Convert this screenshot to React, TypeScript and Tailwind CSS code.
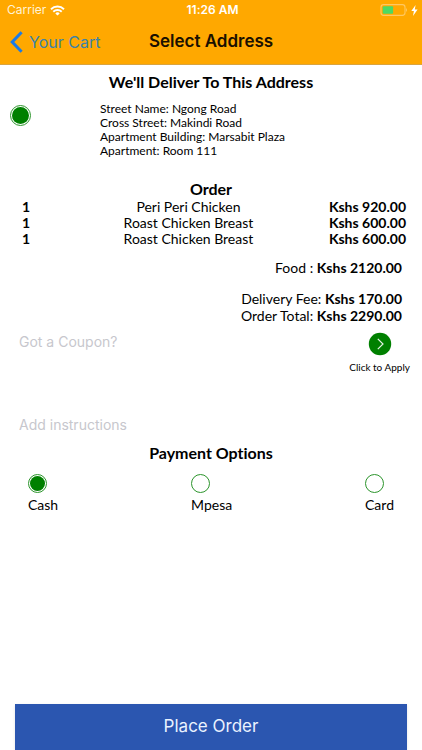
import { useState } from 'react';

const BODY = "font-['Lato',sans-serif]";

const ADDRESS = [
  'Street Name: Ngong Road',
  'Cross Street: Makindi Road',
  'Apartment Building: Marsabit Plaza',
  'Apartment: Room 111',
];

const ITEMS = [
  { id: 1, qty: 1, name: 'Peri Peri Chicken', price: 'Kshs 920.00' },
  { id: 2, qty: 1, name: 'Roast Chicken Breast', price: 'Kshs 600.00' },
  { id: 3, qty: 1, name: 'Roast Chicken Breast', price: 'Kshs 600.00' },
];

const PAYMENTS = ['Cash', 'Mpesa', 'Card'];

function StatusBar() {
  return (
    <div className="grid h-5 grid-cols-3 items-center pl-[7px] pr-1 text-xs text-white">
      <div className="flex items-center gap-1">
        <span className="text-[#fff3d6]">Carrier</span>
        <svg width="15" height="11" viewBox="0 0 15 11" fill="none" stroke="#fff" strokeWidth="1.9">
          <path d="M1 4.2a9.3 9.3 0 0 1 13 0" />
          <path d="M3.3 6.7a6 6 0 0 1 8.4 0" />
          <path d="M7.5 10.6 5.3 8.4a3.1 3.1 0 0 1 4.4 0z" fill="#fff" stroke="none" />
        </svg>
      </div>
      <span className="text-center font-semibold">11:26 AM</span>
      <div className="flex items-center justify-end gap-1">
        <svg width="28" height="12" viewBox="0 0 28 12" fill="none">
          <rect x="2" y="0.6" width="24" height="10.8" rx="2.6" stroke="#ffc861" strokeWidth="1.1" />
          <rect x="3.7" y="2.2" width="10.4" height="7.6" rx="1" fill="#4cd964" />
          <path d="M27 4v4c.7-.5 1-1.2 1-2s-.3-1.5-1-2z" fill="#ffc861" />
        </svg>
        <svg width="7" height="11" viewBox="0 0 7 11" fill="#fff">
          <path d="M4.6 0 0.3 6h2.6L2 11l4.6-6.4H3.8z" />
        </svg>
      </div>
    </div>
  );
}

function NavBar() {
  return (
    <nav className="grid h-[45px] grid-cols-[1fr_auto_1fr] items-center border-b border-[#d9a441] px-[10px]">
      <a href="#cart" className="flex items-center gap-[6px] text-base text-[#3b83a8]">
        <svg width="13" height="22" viewBox="0 0 13 22" fill="none" stroke="#1a7be6" strokeWidth="3">
          <path d="M11.6 1.2 2.2 11l9.4 9.8" />
        </svg>
        Your Cart
      </a>
      <h1 className="text-[17px] font-semibold text-[#1a1000]">Select Address</h1>
    </nav>
  );
}

type RadioProps = { name: string; value: string; checked: boolean; onChange: () => void; label?: string; large?: boolean };

function Radio({ name, value, checked, onChange, label, large }: RadioProps) {
  return (
    <input
      type="radio"
      name={name}
      value={value}
      checked={checked}
      onChange={onChange}
      aria-label={label}
      className={`${large ? 'size-[21px]' : 'size-[19px]'} block shrink-0 appearance-none rounded-full border border-[#2c952c] bg-clip-content p-px checked:bg-[#008000]`}
    />
  );
}

export default function App() {
  const [payment, setPayment] = useState('Cash');
  const [useAddress, setUseAddress] = useState(true);
  const [coupon, setCoupon] = useState('');
  const [instructions, setInstructions] = useState('');

  return (
    <div className={`flex min-h-screen flex-col bg-white text-black [font-variant-ligatures:none] ${BODY}`}>
      <header className="bg-[#ffa800] font-['Inter',sans-serif]">
        <StatusBar />
        <NavBar />
      </header>

      <main className="flex-1">
        <section className="pt-[7px]">
          <h2 className="text-center text-base leading-5 font-bold">We'll Deliver To This Address</h2>
          <div className="mt-[10px] flex px-[10px]">
            <div className="w-[90px] pt-[3px]">
              <Radio name="address" value="home" checked={useAddress} onChange={() => setUseAddress(true)} label="Deliver to this address" large />
            </div>
            <address className="text-xs leading-[14px] not-italic">
              {ADDRESS.map((line) => (
                <p key={line}>{line}</p>
              ))}
            </address>
          </div>
        </section>

        <section className="mt-[21px]">
          <h2 className="text-center text-base leading-5 font-bold">Order</h2>
          <div className="pr-4 pl-[22px]">
            <table className="w-full text-sm leading-4">
              <tbody>
                {ITEMS.map((item) => (
                  <tr key={item.id}>
                    <td className="w-[26px] p-0 font-bold">{item.qty}</td>
                    <td className="p-0 text-center">{item.name}</td>
                    <td className="w-[73px] p-0 text-right font-bold whitespace-nowrap">{item.price}</td>
                  </tr>
                ))}
              </tbody>
            </table>
          </div>
          <div className="mt-3 pr-5 text-right text-sm leading-[17px]">
            <p>Food : <b>Kshs 2120.00</b></p>
            <p className="mt-[14px]">Delivery Fee: <b>Kshs 170.00</b></p>
            <p>Order Total: <b>Kshs 2290.00</b></p>
          </div>
        </section>

        <section className="flex items-start justify-between pt-2 pr-3 pl-[19px]">
          <input
            type="text"
            aria-label="Coupon"
            placeholder="Got a Coupon?"
            value={coupon}
            onChange={(e) => setCoupon(e.target.value)}
            className="h-5 w-48 font-['Inter',sans-serif] text-sm outline-none placeholder:text-[#c7c7cd]"
          />
          <button type="button" className="flex flex-col items-center gap-[3px] text-[10px] leading-4">
            <svg width="24" height="24" viewBox="0 0 24 24" fill="none">
              <circle cx="12" cy="12" r="11.2" fill="#008000" />
              <path d="M9.8 6.8 15 12l-5.2 5.2" stroke="#e3f3e3" strokeWidth="1.2" />
            </svg>
            Click to Apply
          </button>
        </section>

        <section className="mt-10 px-[19px]">
          <input
            type="text"
            aria-label="Instructions"
            placeholder="Add instructions"
            value={instructions}
            onChange={(e) => setInstructions(e.target.value)}
            className="block h-5 w-full font-['Inter',sans-serif] text-sm outline-none placeholder:text-[#c7c7cd]"
          />
        </section>

        <section className="mt-2">
          <h2 className="text-center text-base leading-5 font-bold">Payment Options</h2>
          <div className="mt-[11px] flex justify-between px-7">
            {PAYMENTS.map((option) => (
              <label key={option} className="flex flex-col gap-[2px] text-sm leading-5">
                <Radio name="payment" value={option} checked={payment === option} onChange={() => setPayment(option)} />
                {option}
              </label>
            ))}
          </div>
        </section>
      </main>

      <footer className="px-[15px]">
        <button type="button" className="h-[46px] w-full bg-[#2b56b0] font-['Inter',sans-serif] text-[17px] text-[#eaf2ff] shadow">
          Place Order
        </button>
      </footer>
    </div>
  );
}
